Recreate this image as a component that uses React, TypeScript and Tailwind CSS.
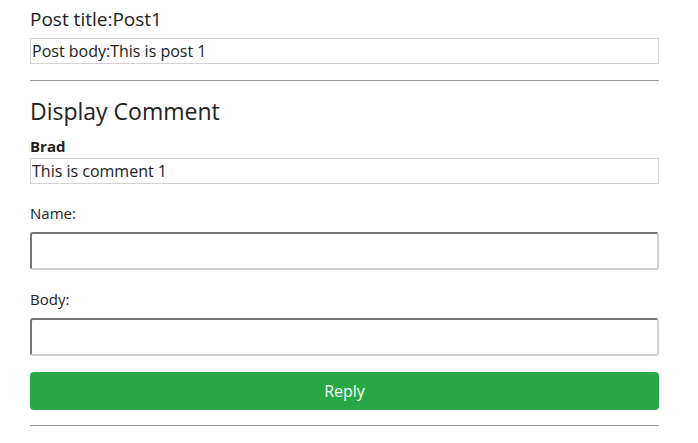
const font = "font-['Comic_Sans_MS','Open_Sans',sans-serif]";

export default function App() {
  return (
    <div className={`${font} bg-white text-[#222] pl-[30px] pr-[39px] pt-[7px] min-h-[443px]`}>
      <h2 className="text-[19px] leading-[24px] text-[#222]">Post title:Post1</h2>
      <div className="mt-[7px] h-[26px] border border-[#d3d3d3] px-[1px] text-[16px] leading-[24px]">
        Post body:This is post 1
      </div>
      <hr className="mt-[16px] border-t border-[#999]" />

      <h3 className="mt-[15px] text-[23px] leading-[30px]">Display Comment</h3>
      <div className="mt-[10px] text-[15px] leading-[20px] font-bold">Brad</div>
      <div className="mt-[2px] h-[26px] border border-[#d3d3d3] px-[1px] text-[16px] leading-[24px]">
        This is comment 1
      </div>

      <label className="block mt-[19px] text-[15px] leading-[20px]">Name:</label>
      <input
        className="block mt-[9px] w-full h-[38px] rounded-[3px] border-2 border-t-[#767676] border-l-[#767676] border-b-[#d0d0d0] border-r-[#d0d0d0] outline-none px-2"
        type="text"
      />

      <label className="block mt-[19px] text-[15px] leading-[20px]">Body:</label>
      <input
        className="block mt-[9px] w-full h-[38px] rounded-[3px] border-2 border-t-[#767676] border-l-[#767676] border-b-[#d0d0d0] border-r-[#d0d0d0] outline-none px-2"
        type="text"
      />

      <button className="mt-[16px] w-full h-[38px] rounded-[4px] bg-[#28a745] text-white text-[16px]">
        Reply
      </button>
      <hr className="mt-[15px] border-t border-[#999]" />
    </div>
  );
}
